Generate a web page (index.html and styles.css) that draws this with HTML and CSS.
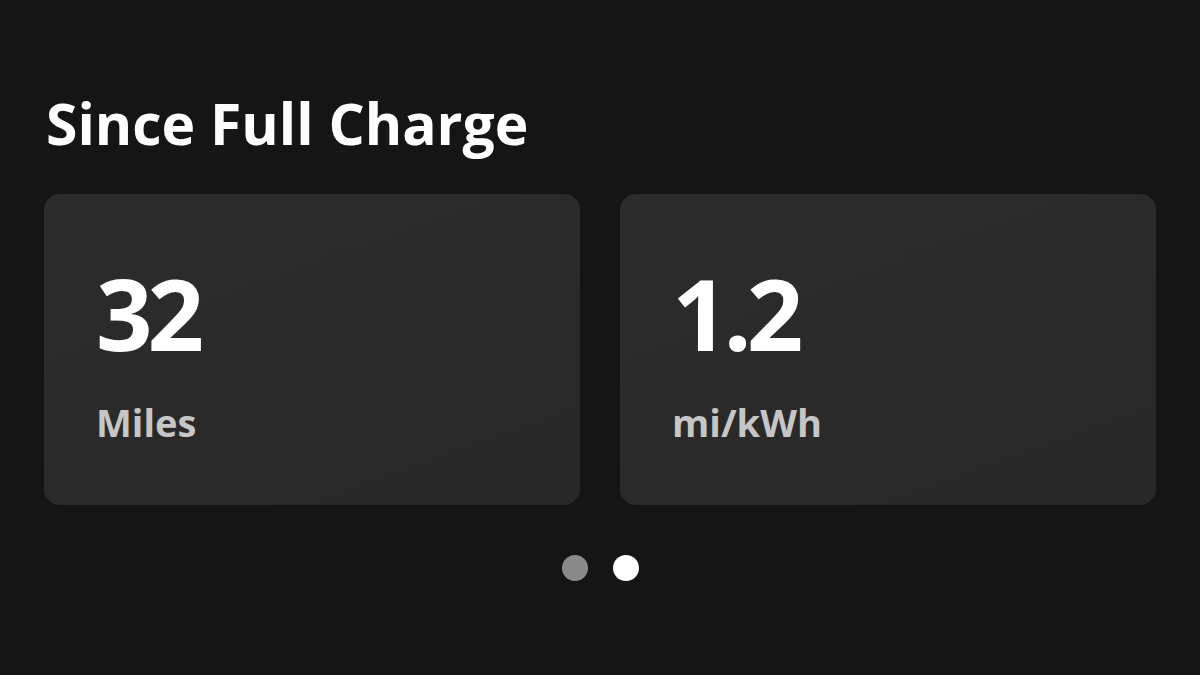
FILE: index.html
```html
<!DOCTYPE html>
<html>
<head>
<meta charset="utf-8">
<link rel="stylesheet" href="styles.css">
</head>
<body>
<main class="screen">
  <h1 class="title">Since Full Charge</h1>
  <section class="cards">
    <div class="card">
      <div class="value">32</div>
      <div class="unit">Miles</div>
    </div>
    <div class="card">
      <div class="value">1.2</div>
      <div class="unit">mi/kWh</div>
    </div>
  </section>
  <div class="dots">
    <span class="dot"></span>
    <span class="dot active"></span>
  </div>
</main>
</body>
</html>
```
FILE: styles.css
```css
html, body {
  margin: 0;
  padding: 0;
  background: #151515;
}
.screen {
  width: 1200px;
  height: 675px;
  box-sizing: border-box;
  padding: 87px 44px 0 44px;
  font-family: "Open Sans", "DejaVu Sans", sans-serif;
  color: #fff;
  display: flex;
  flex-direction: column;
}
.title {
  margin: 0 0 0 2px;
  font-size: 57px;
  font-weight: 700;
  line-height: 72px;
  letter-spacing: 0;
}
.cards {
  margin-top: 35px;
  display: grid;
  grid-template-columns: 1fr 1fr;
  gap: 40px;
}
.card {
  height: 311px;
  border-radius: 16px;
  background: linear-gradient(160deg, #2c2c2c, #282828);
  box-sizing: border-box;
  padding: 64px 50px 0 52px;
  display: flex;
  flex-direction: column;
}
.value {
  font-size: 99px;
  font-weight: 700;
  line-height: 110px;
  letter-spacing: -5px;
}
.unit {
  margin-top: 32px;
  font-size: 38px;
  font-weight: 700;
  line-height: 44px;
  color: #c6c6c6;
}
.dots {
  margin-top: 50px;
  display: flex;
  justify-content: center;
  gap: 25px;
}
.dot {
  width: 26px;
  height: 26px;
  border-radius: 50%;
  background: #8a8a8a;
}
.dot.active {
  background: #ffffff;
}
```
